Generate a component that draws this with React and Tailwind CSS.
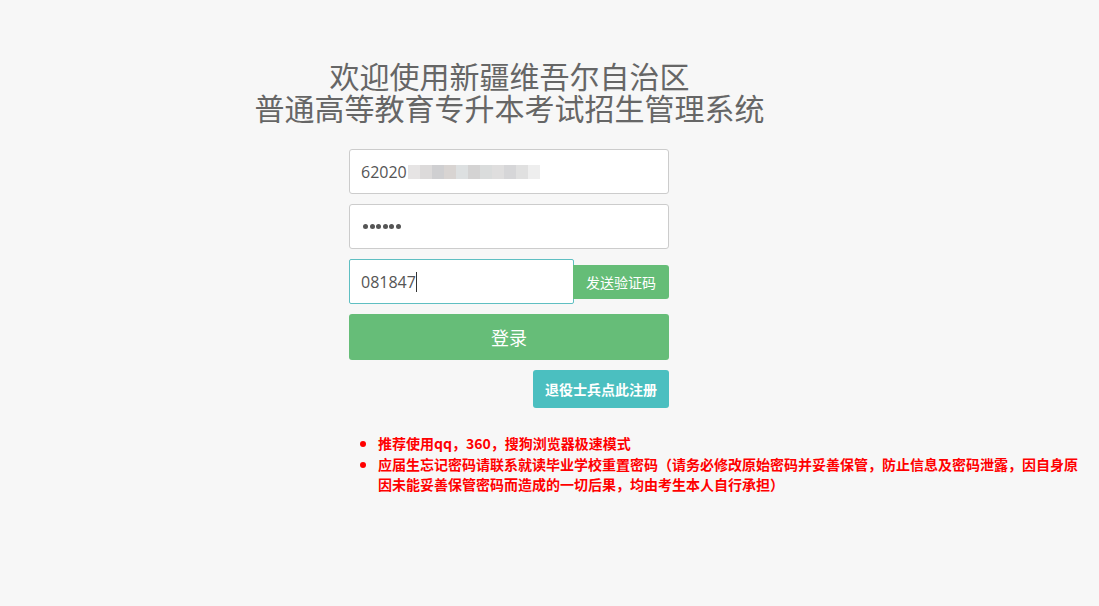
export default function App() {
  const blur = ["#e6e4e4", "#dcdada", "#cfcfd1", "#d8d4d2", "#dde0e1", "#d4d3d3", "#dadcdc", "#dfdede", "#d6d6d8", "#e0e0e0", "#eeeeee"];
  return (
    <div className="min-h-[606px] w-full bg-[#f7f7f7] font-['Noto_Sans_CJK_SC',sans-serif]">
      <div className="w-[1019px] flex flex-col items-center pt-[59px]">
        <h1 className="text-[30px] leading-[32px] text-[#666] text-center font-normal">
          欢迎使用新疆维吾尔自治区
          <br />
          普通高等教育专升本考试招生管理系统
        </h1>
      </div>
      <div className="ml-[349px] w-[320px] mt-[26px] flex flex-col">
        <div className="h-[45px] bg-white border border-[#ccc] rounded-[3px] flex items-center px-[11px] text-[16px] text-[#555]">
          <span className="font-['Open_Sans',sans-serif]">62020</span>
          <span className="flex h-[14px] ml-[1px]">
            {blur.map((c, i) => (
              <span key={i} className="w-[12px] h-full" style={{ background: c }} />
            ))}
          </span>
        </div>
        <div className="h-[45px] mt-[10px] bg-white border border-[#ccc] rounded-[3px] flex items-center gap-[1.5px] px-[13px]">
          {[0, 1, 2, 3, 4, 5].map((i) => (
            <span key={i} className="w-[5px] h-[5px] rounded-full bg-[#555]" />
          ))}
        </div>
        <div className="mt-[10px] flex items-center">
          <div className="w-[225px] h-[45px] bg-white border border-[#5fbfc2] rounded-[2px] flex items-center px-[11px] text-[16px] text-[#555]">
            <span className="font-['Open_Sans',sans-serif]">081847</span>
            <span className="w-px h-[20px] bg-[#333]" />
          </div>
          <button className="ml-[-1px] w-[96px] h-[34px] bg-[#65bd77] rounded-r-[3px] text-white text-[14px] leading-none">
            发送验证码
          </button>
        </div>
        <button className="mt-[10px] h-[46px] bg-[#66bd78] rounded-[3px] text-white text-[18px]">登录</button>
        <div className="flex justify-end mt-[10px]">
          <button className="w-[136px] h-[38px] bg-[#4bbfc0] rounded-[3px] text-white text-[14px] font-bold">
            退役士兵点此注册
          </button>
        </div>
      </div>
      <ul className="ml-[358px] mt-[25px] w-[726px] pl-[20px] text-[14px] leading-[20.5px] font-bold text-[#ff0000] list-disc marker:text-[15px]">
        <li>推荐使用qq，360，搜狗浏览器极速模式</li>
        <li>
          应届生忘记密码请联系就读毕业学校重置密码（请务必修改原始密码并妥善保管，防止信息及密码泄露，因自身原因未能妥善保管密码而造成的一切后果，均由考生本人自行承担）
        </li>
      </ul>
    </div>
  );
}
